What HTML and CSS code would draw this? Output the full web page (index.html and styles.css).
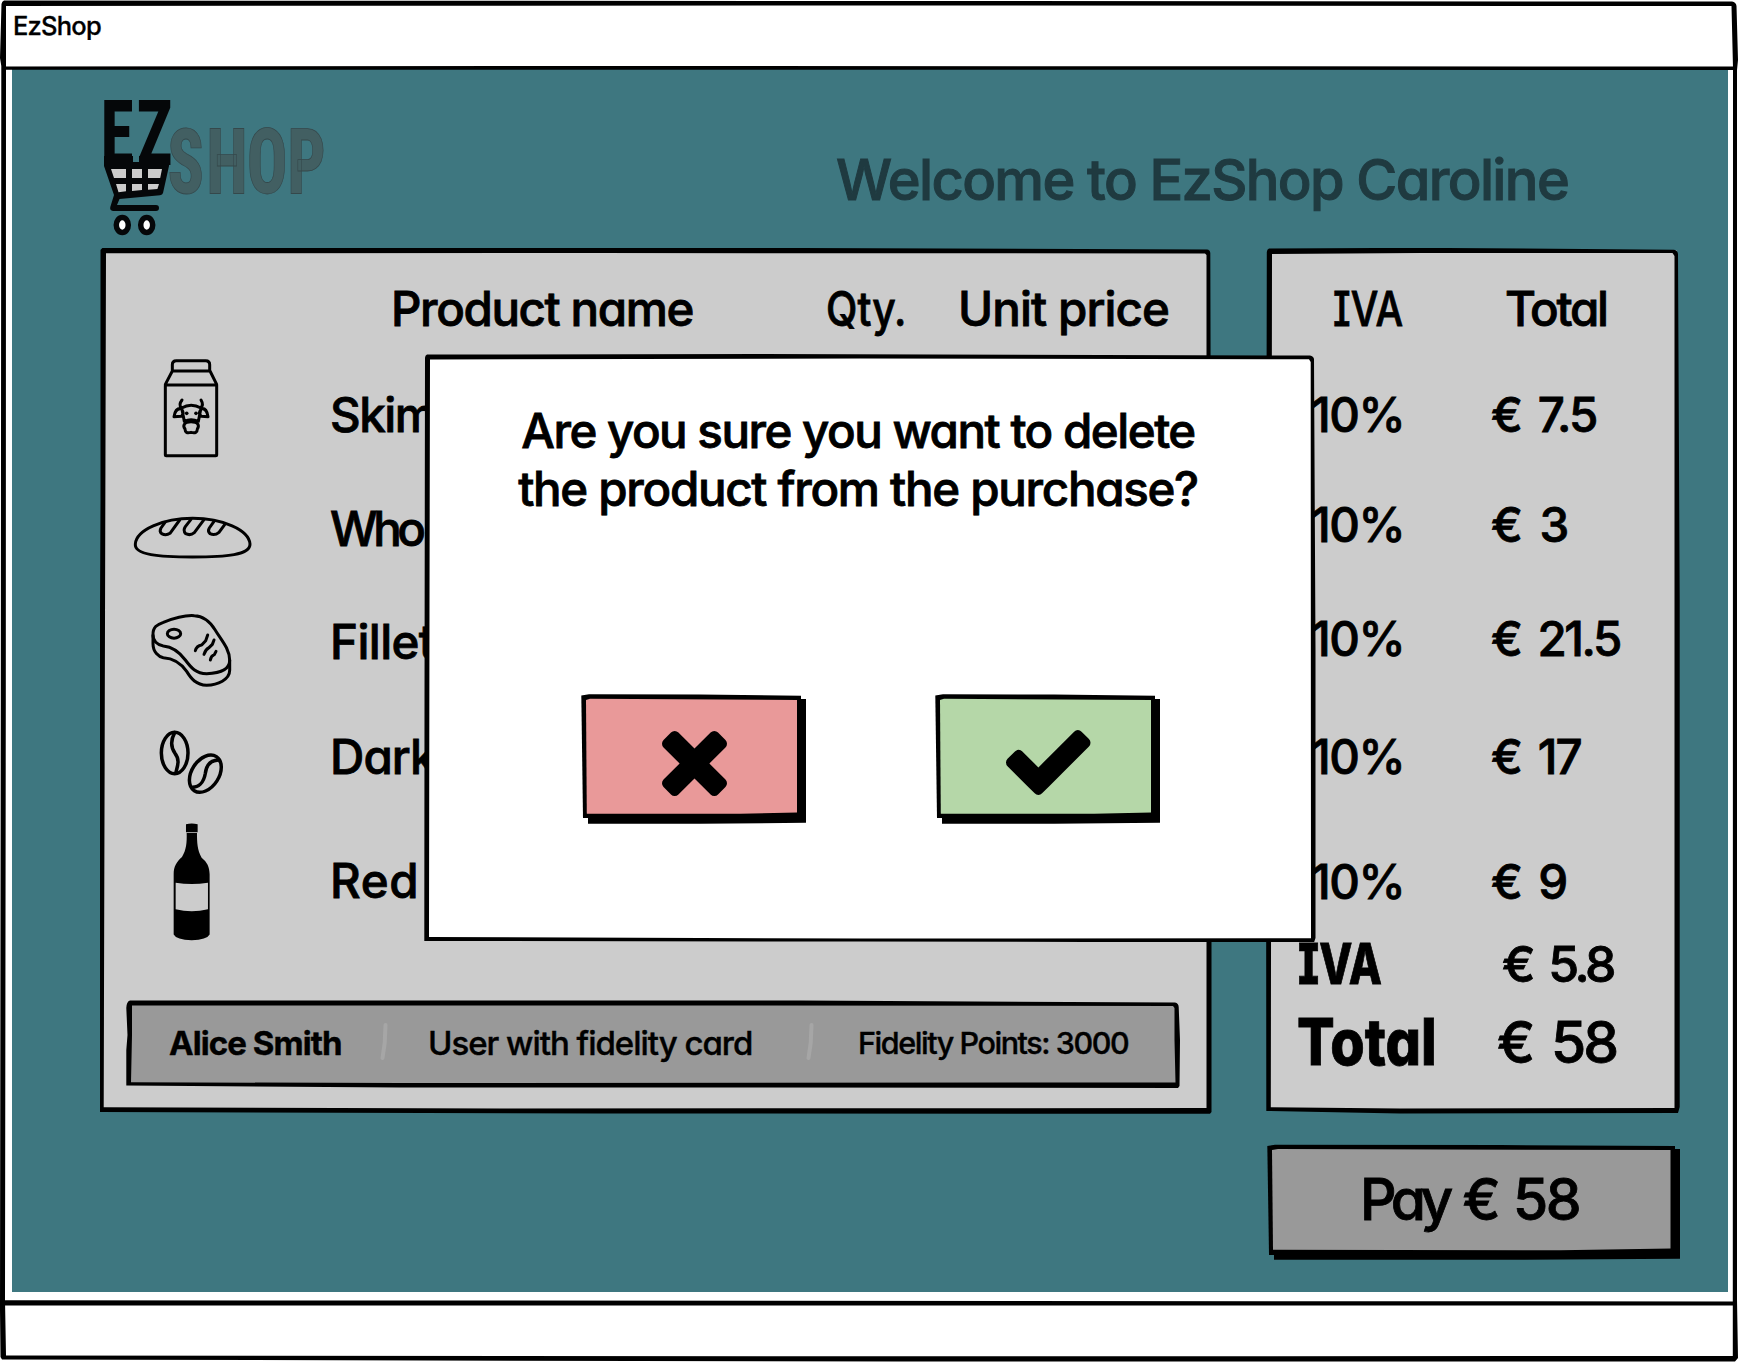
FILE: index.html
```html
<!DOCTYPE html>
<html lang="en">
<head>
<meta charset="utf-8">
<title>EzShop</title>
<link rel="stylesheet" href="styles.css">
</head>
<body>
<div class="window">
  <header class="titlebar">EzShop</header>
  <main class="screen">
    <div class="top">
      <svg class="logo" viewBox="100 90 230 150" role="img" aria-label="EZ Shop">
        <g transform="scale(.735 1)">
          <text class="logo-ez" y="165" x="137 186">EZ</text>
          <text class="logo-shop" y="193" x="228 281 336 391">SHOP</text>
        </g>
        <path fill="#050709" d="M104 156h29v6h6v-6h30v10l-6 27q-.5 2-3 2.300L119.500 199l-2.500 6H156a3 3 0 0 1 0 6H113q-3.500-.5-2.700-4l3.700-12L104 166z"/>
        <path fill="#ccc" d="M111 169h15v9h-12zM132 169h10v9h-10zM148 169h14l-1.800 9H148zM116 184h10v7.300l-7.500 1zM132 184h10v6l-10 1zM148 184h11l-1.600 5-9.400.8z"/>
        <g fill="#fff" stroke="#050709" stroke-width="5.500">
          <ellipse cx="122.300" cy="225" rx="6" ry="7.400"/>
          <ellipse cx="146.700" cy="225" rx="6" ry="7.400"/>
        </g>
      </svg>
      <h1 class="welcome">Welcome to EzShop Caroline</h1>
    </div>

    <div class="columns">
      <section class="panel cart">
        <svg class="sketch" viewBox="100 248 1112 866">
          <path fill="#ccc" d="M103 250H1209V1111H102z"/>
          <path fill-rule="evenodd" d="M102.500 247.800L800 248 1207 249.500Q1210 249.500 1210.300 253L1211.500 700V1112L1210 1113.700 600 1113.500 99.500 1112 98.700 900 100.500 500V250zM106 253.300L103.700 1107.300 500 1108.500 1206.500 1108V255L1205 253.500 600 253z"/>
        </svg>
        <div class="head">
          <span class="h-name">Product name</span>
          <span class="h-qty narrow-qty">Qty.</span>
          <span class="h-price">Unit price</span>
        </div>
        <ul class="items">
          <li><span class="pic"><svg class="milk" viewBox="213 50 179 305">
            <g class="line">
              <path d="M226 134H380V343q0 3-3 3H229q-3 0-3-3zM226 132L247 92H360L380 132M247 92V73q0-12 12-12H347q12 0 12 12V92"/>
              <path d="M275 203q28-17 58 0l-8 40q-22-10-42 0zM273 205q-17-2-21 24l22-1q8-7 4-16M335 205q15-2 19 24l-20-1q-9-7-4-16M274 202q-9-8 2-23M332 202q10-8 1-23"/>
              <path d="M283 252q4-8 20-8t21 8q3 6-2 14 0 15-19 10-18 5-18-10-6-8-2-14" fill="#ccc"/>
            </g>
            <circle cx="290" cy="219" r="5.500"/><circle cx="318" cy="219" r="5.500"/>
          </svg></span><span class="name n-skim">Skim</span></li>
          <li><span class="pic"><svg class="bread" viewBox="130 525 360 135">
            <g class="line">
              <path d="M137 612C140 570 220 535 309 535S478 570 481 612C482 645 410 651 309 651S134 645 137 612z"/>
              <path d="M226 547L214 564q-6 10 2 17 13 7 25-1L270 540M304 538L287 560q-8 12 1 21 14 7 26-3L343 539M373 544L359 564q-6 9 2 17 14 7 27-4L405 554"/>
            </g>
          </svg></span><span class="name n-who">Who</span></li>
          <li><span class="pic"><svg class="steak" viewBox="185 95 245 230">
            <g class="line">
              <path d="M191 165C190 140 203 133 222 126 260 111 290 104 315 106 345 107 364 127 377 148 395 178 421 205 421 240 421 270 385 279 352 280 320 280 305 262 288 239 274 220 256 200 222 197 203 194 191 181 191 165z"/>
              <path d="M191 165V190C191 215 208 229 222 232 256 234 276 250 292 273 306 296 320 313 352 315 385 314 421 298 421 270V240"/>
              <ellipse cx="254" cy="160" rx="20" ry="13.500"/>
              <path d="M355 164l-6 17-12 13q-15 2-19 17M374 179l-5 13-10 10q-11 6-15 20M380 213l-5 10q-10 3-12 16"/>
            </g>
          </svg></span><span class="name n-fillet">Fillet</span></li>
          <li><span class="pic"><svg class="beans" viewBox="205 450 200 195">
            <g class="line bold">
              <ellipse cx="255" cy="519" rx="40" ry="62"/>
              <path d="M255 458C243 480 242 500 256 520 272 540 263 560 258 580"/>
              <g transform="rotate(33 347 581)"><ellipse cx="347" cy="581" rx="41" ry="61"/></g>
              <path d="M386 540C360 541 350 556 347 580 342 610 325 622 308 622"/>
            </g>
          </svg></span><span class="name n-dark">Dark</span></li>
          <li><span class="pic"><svg class="bottle" viewBox="245 728 118 358">
            <path d="M287 735q17-5 35 0V759H287zM289 761H320C320 790 321 812 334 835 350 848 358 862 358 885V1066Q350 1082 304 1083 258 1082 250 1066V885C250 862 258 848 275 833 288 812 290 790 289 761z"/>
            <path fill="#ccc" d="M256 910Q304 918 353 910V990Q304 1002 256 990z"/>
          </svg></span><span class="name n-red">Red</span></li>
        </ul>
        <div class="customer">
          <svg class="sketch" viewBox="126 1000 1054 88">
            <path fill="#999" d="M129 1003H1177V1085H128z"/>
            <path fill-rule="evenodd" d="M130 1000.500L800 1000.500 1175 1002.500Q1178.500 1003 1178.700 1007L1180 1040 1179.500 1086 1178 1088 700 1087.500 400 1087.500 126.300 1085.500 126.300 1050 127.500 1035 126.300 1008Q126.500 1001.500 130 1000.500zM132 1005.500V1035L131 1082.300 400 1083 1175.500 1082.500 1174.500 1040V1008L1173 1006 700 1005.500z"/>
          </svg>
          <b class="c-name">Alice Smith</b>
          <svg class="slash" viewBox="0 0 10 40"><path d="M6.500 4L5.700 22 3.500 37"/></svg>
          <span class="c-card">User with fidelity card</span>
          <svg class="slash" viewBox="0 0 10 40"><path d="M6.500 4L5.700 22 3.500 37"/></svg>
          <span class="c-points">Fidelity Points: 3000</span>
        </div>
      </section>

      <div class="side">
        <section class="panel totals">
          <svg class="sketch" viewBox="1266 248 414 866">
            <path fill="#ccc" d="M1269 250.500H1677V1111H1269z"/>
            <path fill-rule="evenodd" d="M1269 248.500L1420 247.800 1674 249.700Q1677.500 250 1678 254L1679.700 600V1107L1678 1113 1400 1113.500 1266.300 1111 1266 700 1266.800 252Q1267 249 1269 248.500zM1272 254L1270.800 1107.300 1400 1108.500 1674.500 1108V256L1672.500 253 1420 253z"/>
          </svg>
          <div class="row head-row"><span class="t-iva narrow-iva">IVA</span><span class="t-total">Total</span></div>
          <div class="row r1"><span class="pct">10%</span><span class="amt">€ 7.5</span></div>
          <div class="row r2"><span class="pct">10%</span><span class="amt a3">€ 3</span></div>
          <div class="row r3"><span class="pct">10%</span><span class="amt a21">€ 21.5</span></div>
          <div class="row r4"><span class="pct">10%</span><span class="amt">€ 17</span></div>
          <div class="row r5"><span class="pct">10%</span><span class="amt a9">€ 9</span></div>
          <div class="row sum-iva"><b>IVA</b><span>€ 5.8</span></div>
          <div class="row sum-total"><b>Total</b><span>€ 58</span></div>
        </section>
        <button class="pay">
          <svg class="sketch" viewBox="1266 1144 414 116">
            <path d="M1274 1149H1680V1258.800L1500 1259.800H1274z"/>
            <path d="M1267.300 1146L1275 1144.700 1500 1145 1675 1146V1255H1269z"/>
            <path fill="#999" d="M1272 1150L1278 1149 1670.500 1150V1248.500L1560 1250.300 1273 1249.800z"/>
          </svg>
          <span class="pay-label"><span class="verb">Pay</span> € 58</span>
        </button>
      </div>
    </div>
  </main>
  <footer class="statusbar"></footer>

  <svg class="sketch frame" viewBox="0 0 1738 1362">
    <path fill-rule="evenodd" d="M4 .5L900 1 1732 1.500Q1736 2 1736.500 6L1738 60 1737 70V1300L1738 1358 1735 1361.500H900L2 1359.500.5 1357 0 1310 .8 700 1.300 66 0 58 1.500 4Q2 1 4 .5zM6 6V66L5.800 700 5 1300 6 1355.500 900 1356.300 1732.800 1356V1304L1733 68 1731.500 6 900 5.500z"/>
    <path d="M5 66.500L600 66 1734 66.500V70L900 69.700 5 69.800zM5 1300.200L1734 1301.500V1305.500L900 1305.500 5 1305.500z"/>
  </svg>

  <div class="dialog" role="dialog">
    <svg class="sketch" viewBox="424 354 892 588">
      <path fill="#fff" d="M427 357H1313V939H427z"/>
      <path fill-rule="evenodd" d="M427 354.500L760 354 1310 355.500Q1313.500 356 1314 359L1315.500 650V938L1314 942.500 860 941.500 424.300 941 424.500 700 425 358Q425 355 427 354.500zM430 359.500L429.500 600 429 937 860 938.500 1311 938.300 1310.700 362 1309 359.300 860 358.500z"/>
    </svg>
    <p class="question"><span class="q1">Are you sure you want to delete</span><br><span class="q2">the product from the purchase?</span></p>
    <div class="actions">
      <button class="choice">
        <svg class="sketch" viewBox="581 694 226 130">
          <path d="M588 699H806V822.800L700 823.800H588z"/>
          <path d="M581.300 695.500L589 694.200 700 694.500 801 695.800V818H583z"/>
          <path fill="#e99999" d="M586 700L590 698.700 797 700V812.500L740 813.700 586.800 813.800z"/>
        </svg>
        <svg class="icon-x" viewBox="302 366 1188 1188"><path d="M1490 1322q0 40-28 68l-136 136q-28 28-68 28t-68-28l-294-294-294 294q-28 28-68 28t-68-28l-136-136q-28-28-28-68t28-68l294-294-294-294q-28-28-28-68t28-68l136-136q28-28 68-28t68 28l294 294 294-294q28-28 68-28t68 28l136 136q28 28 28 68t-28 68l-294 294 294 294q28 28 28 68z"/></svg>
      </button>
      <button class="choice">
        <svg class="sketch" viewBox="581 694 226 130">
          <path d="M588 699H806V822.800L700 823.800H588z"/>
          <path d="M581.300 695.500L589 694.200 700 694.500 801 695.800V818H583z"/>
          <path fill="#b5d7a8" d="M586 700L590 698.700 797 700V812.500L740 813.700 586.800 813.800z"/>
        </svg>
        <svg class="icon-check" viewBox="121 334 1550 1188"><path d="M1671 566q0 40-28 68l-724 724-136 136q-28 28-68 28t-68-28l-136-136-362-362q-28-28-28-68t28-68l136-136q28-28 68-28t68 28l294 295 656-657q28-28 68-28t68 28l136 136q28 28 28 68z"/></svg>
      </button>
    </div>
  </div>
</div>
</body>
</html>
```
FILE: styles.css
```css
* { box-sizing: border-box; }

body {
  margin: 0;
  background: #fff;
  color: #000;
  font: 500 47.5px/1 Inter, "Liberation Sans", sans-serif;
  font-feature-settings: "cv11", "cv08";
  -webkit-text-stroke: .8px currentColor;
}

span, b, h1 { white-space: nowrap; }
h1, p, ul { margin: 0; padding: 0; }
ul { list-style: none; }

button {
  position: relative;
  border: 0;
  padding: 0;
  background: none;
  color: inherit;
  font: inherit;
  font-feature-settings: inherit;
  display: flex;
}

.window {
  position: relative;
  display: flex;
  flex-direction: column;
  width: 1738px;
  height: 1362px;
  overflow: hidden;
}

/* Hand-drawn outline lying behind a box's content */
.sketch {
  position: absolute;
  inset: 0;
  width: 100%;
  height: 100%;
  z-index: 0;
}
.sketch.frame { pointer-events: none; }

.titlebar {
  height: 68px;
  padding: 13px 0 0 13px;
  font-size: 25.5px;
  letter-spacing: -.77px;
  -webkit-text-stroke-width: .3px;
}

.screen {
  height: 1224px;
  margin: 0 10px 0 12px;
  background: #3e7780;
}
.statusbar { flex: 1; }

.top {
  display: flex;
  height: 180px;
  padding: 22px 0 0 88px;
}
.logo { width: 230px; height: 150px; }
.logo text { font-family: "Roboto Condensed", Roboto, sans-serif; font-weight: 800; font-size: 91px; -webkit-text-stroke: 0; }
.logo-ez { fill: #050709; }
.logo-shop { fill: #425f62; stroke: #35484b; stroke-width: .8px; }
.welcome {
  margin: 62px 0 0 506px;
  font-size: 56px;
  font-weight: 500;
  letter-spacing: -1.63px;
  color: #1f3a40;
  -webkit-text-stroke: 1px #1f3a40;
}

.columns { display: flex; gap: 54px; padding-left: 88px; }
.panel { position: relative; height: 866px; padding-top: 10px; }
.panel > *:not(.sketch) { position: relative; }
.cart { width: 1112px; }

.head {
  display: grid;
  grid-template-columns: 435px 132px auto;
  align-items: center;
  height: 100px;
  padding: 2px 0 0 291px;
}
.h-name { letter-spacing: -1.4px; }
.h-price { letter-spacing: -.92px; }
.narrow-qty { transform: scaleX(.86); transform-origin: left; }
.narrow-iva { transform: scaleX(.82); transform-origin: left; }

.items { display: grid; grid-template-rows: 113px 115px 112px 117px 131px; }
.items li {
  display: grid;
  grid-template-columns: 183px auto;
  column-gap: 47px;
  align-items: center;
}
.pic { display: flex; justify-content: center; }
.line { fill: none; stroke: #000; stroke-width: 9; stroke-linecap: round; stroke-linejoin: round; }
.line.bold { stroke-width: 10.5; }
.milk { width: 59.7px; height: 101.7px; margin: -14px 1px 0 0; }
.bread { width: 120px; height: 45px; margin: 18px 0 0 3px; }
.steak { width: 81.7px; height: 76.7px; margin-top: 16px; }
.beans { width: 66.7px; height: 65px; margin-top: 12px; }
.bottle { width: 39.3px; height: 119.3px; margin-top: 3px; }
.n-skim { letter-spacing: -1.5px; }
.n-who { letter-spacing: -4.5px; }
.n-fillet { letter-spacing: -.6px; }
.n-dark { letter-spacing: -.9px; }
.n-red { letter-spacing: .6px; }

.customer {
  display: grid;
  grid-template-columns: 209px 51px 375px 55px auto;
  align-items: center;
  width: 1054px;
  height: 88px;
  margin: 54px 0 0 26px;
  padding: 0 0 2px 43px;
  font-size: 33px;
  -webkit-text-stroke-width: .4px;
}
.customer > *:not(.sketch) { position: relative; }
.c-name { font-weight: 700; letter-spacing: -.93px; }
.c-card { margin-left: -1px; letter-spacing: -1.02px; }
.c-points { margin-left: -1px; font-size: 30.5px; letter-spacing: -1.44px; }
.slash { width: 10px; height: 40px; margin: -5px 0 0 1px; }
.slash path { fill: none; stroke: #a6a6a6; stroke-width: 4; stroke-linecap: round; }

.side { display: flex; flex-direction: column; gap: 30px; width: 414px; }
.row {
  display: grid;
  grid-template-columns: 180px auto;
  align-items: center;
  padding-left: 45px;
}
.head-row { height: 100px; grid-template-columns: 172px auto; padding: 2px 0 0 67px; }
.t-total { letter-spacing: -2.27px; }
.r1 { height: 113px; }
.r2 { height: 108px; }
.r3 { height: 119px; }
.r4 { height: 117px; }
.r5 { height: 133px; }
.pct { letter-spacing: -1.5px; }
.amt { letter-spacing: -1.9px; word-spacing: 6px; }
.a3 { letter-spacing: -1px; }
.a9 { letter-spacing: -1.2px; word-spacing: 5px; }
.a21 { letter-spacing: -2.5px; word-spacing: 7px; }
.sum-iva { height: 55px; margin: -12px 0; padding-left: 32px; grid-template-columns: 204px auto; font-size: 50px; }
.sum-iva b { font-size: 56px; font-weight: 800; transform: scaleX(.77); transform-origin: left; }
.sum-iva span { letter-spacing: -3.4px; word-spacing: 6px; }
.sum-total { height: 124px; padding: 2px 0 0 31px; grid-template-columns: 200px auto; font-size: 57px; }
.sum-total b { font-size: 64px; font-weight: 800; transform: scaleX(.87); transform-origin: left; }
.sum-total span { letter-spacing: -2.8px; word-spacing: 6px; }

.pay { width: 414px; height: 116px; align-items: center; padding: 0 0 6px 94px; font-size: 57px; }
.pay-label { position: relative; letter-spacing: -2.5px; word-spacing: 2px; }
.verb { letter-spacing: -5.5px; }

.dialog {
  position: absolute;
  left: 424px;
  top: 354px;
  width: 892px;
  height: 588px;
}
.question {
  position: relative;
  width: 868px;
  padding-top: 47.5px;
  line-height: 58px;
  text-align: center;
}
.q1 { letter-spacing: -1.49px; }
.q2 { letter-spacing: -1.3px; }
.actions { display: flex; gap: 128.3px; margin: 176.5px 0 0 157px; }
.choice { width: 226px; height: 130px; }
.icon-x { position: relative; width: 65px; height: 65px; margin: 37px 0 0 80.5px; }
.icon-check { position: relative; width: 84.5px; height: 65px; margin: 35.5px 0 0 71px; }
```
